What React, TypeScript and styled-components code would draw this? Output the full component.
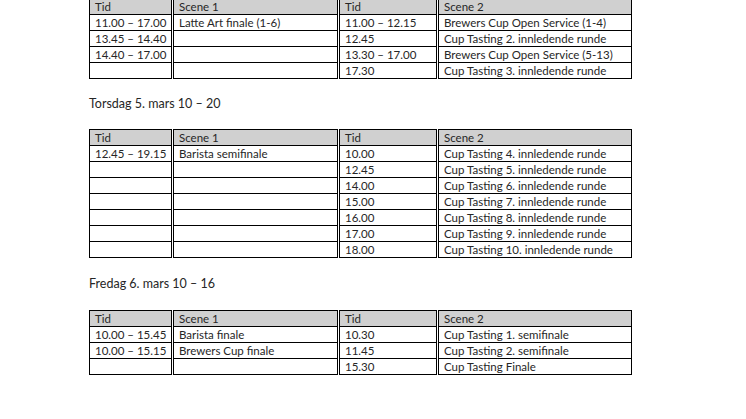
import React from "react";
import styled, { createGlobalStyle } from "styled-components";

const GlobalStyle = createGlobalStyle`
  html, body {
    margin: 0;
    padding: 0;
    background: #ffffff;
  }
  body {
    font-family: Lato, "Liberation Sans", sans-serif;
    color: #262626;
  }
`;

type Row = [string, string, string, string];

type Day = {
  title?: string;
  space?: number;
  rows: Row[];
};

const days: Day[] = [
  {
    rows: [
      ["11.00 – 17.00", "Latte Art finale (1-6)", "11.00 – 12.15", "Brewers Cup Open Service (1-4)"],
      ["13.45 – 14.40", "", "12.45", "Cup Tasting 2. innledende runde"],
      ["14.40 – 17.00", "", "13.30 – 17.00", "Brewers Cup Open Service (5-13)"],
      ["", "", "17.30", "Cup Tasting 3. innledende runde"],
    ],
  },
  {
    title: "Torsdag 5. mars 10 – 20",
    space: 17,
    rows: [
      ["12.45 – 19.15", "Barista semifinale", "10.00", "Cup Tasting 4. innledende runde"],
      ["", "", "12.45", "Cup Tasting 5. innledende runde"],
      ["", "", "14.00", "Cup Tasting 6. innledende runde"],
      ["", "", "15.00", "Cup Tasting 7. innledende runde"],
      ["", "", "16.00", "Cup Tasting 8. innledende runde"],
      ["", "", "17.00", "Cup Tasting 9. innledende runde"],
      ["", "", "18.00", "Cup Tasting 10. innledende runde"],
    ],
  },
  {
    title: "Fredag 6. mars 10 – 16",
    space: 18,
    rows: [
      ["10.00 – 15.45", "Barista finale", "10.30", "Cup Tasting 1. semifinale"],
      ["10.00 – 15.15", "Brewers Cup finale", "11.45", "Cup Tasting 2. semifinale"],
      ["", "", "15.30", "Cup Tasting Finale"],
    ],
  },
];

const colWidths = [83, 166, 99, 194];
const headers = ["Tid", "Scene 1", "Tid", "Scene 2"];

const Page = styled.div`
  padding-left: 89px;
  margin-top: -2px;
`;

const Heading = styled.p<{ $space: number }>`
  margin: ${(p) => p.$space}px 0;
  font-size: 12.5px;
  line-height: 16px;
  color: #262626;
`;

const Table = styled.table`
  border-collapse: collapse;
  table-layout: fixed;
  width: 541px;
  font-size: 11.5px;
`;

const HeadCell = styled.th<{ $sep: boolean }>`
  background: #d0d0d0;
  font-weight: normal;
  text-align: left;
  height: 15px;
  line-height: 15px;
  padding: 0 5px;
  border: 1px solid #000;
  border-left: ${(p) => (p.$sep ? "3px double #000" : "1px solid #000")};
  white-space: nowrap;
  overflow: hidden;
`;

const Cell = styled.td<{ $sep: boolean }>`
  height: 15px;
  line-height: 15px;
  padding: 0 5px;
  border: 1px solid #000;
  border-left: ${(p) => (p.$sep ? "3px double #000" : "1px solid #000")};
  white-space: nowrap;
  overflow: hidden;
`;

const Schedule = ({ rows }: { rows: Row[] }) => (
  <Table>
    <colgroup>
      {colWidths.map((w, i) => (
        <col key={i} style={{ width: w }} />
      ))}
    </colgroup>
    <thead>
      <tr>
        {headers.map((h, i) => (
          <HeadCell key={i} $sep={i > 0}>
            {h}
          </HeadCell>
        ))}
      </tr>
    </thead>
    <tbody>
      {rows.map((r, ri) => (
        <tr key={ri}>
          {r.map((c, ci) => (
            <Cell key={ci} $sep={ci > 0}>
              {c}
            </Cell>
          ))}
        </tr>
      ))}
    </tbody>
  </Table>
);

export default function App() {
  return (
    <>
      <GlobalStyle />
      <Page>
        {days.map((d, i) => (
          <React.Fragment key={i}>
            {d.title && <Heading $space={d.space ?? 17}>{d.title}</Heading>}
            <Schedule rows={d.rows} />
          </React.Fragment>
        ))}
      </Page>
    </>
  );
}
